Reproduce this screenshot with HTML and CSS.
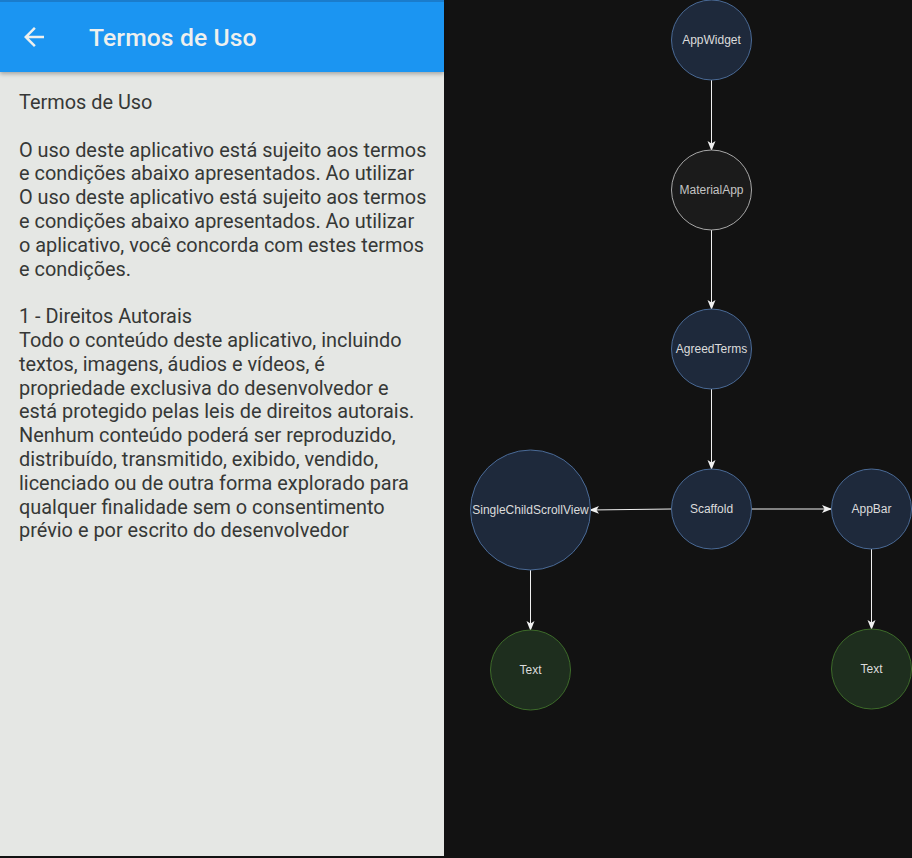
FILE: index.html
```html
<!DOCTYPE html>
<html lang="pt">
<head>
<meta charset="utf-8">
<title>Termos de Uso</title>
<link rel="stylesheet" href="styles.css">
</head>
<body>
<div class="page">
  <section class="phone">
    <header class="appbar">
      <svg class="back" viewBox="0 0 24 24" width="30" height="30"><path d="M20 11H7.83l5.59-5.59L12 4l-8 8 8 8 1.41-1.41L7.83 13H20v-2z"/></svg>
      <h1 class="title">Termos de Uso</h1>
    </header>
    <div class="content">
      <p class="para">Termos de Uso</p>
      <p class="para">O uso deste aplicativo está sujeito aos termos<br>e condições abaixo apresentados. Ao utilizar<br>O uso deste aplicativo está sujeito aos termos<br>e condições abaixo apresentados. Ao utilizar<br>o aplicativo, você concorda com estes termos<br>e condições.</p>
      <p class="para">1 - Direitos Autorais<br>Todo o conteúdo deste aplicativo, incluindo<br>textos, imagens, áudios e vídeos, é<br>propriedade exclusiva do desenvolvedor e<br>está protegido pelas leis de direitos autorais.<br>Nenhum conteúdo poderá ser reproduzido,<br>distribuído, transmitido, exibido, vendido,<br>licenciado ou de outra forma explorado para<br>qualquer finalidade sem o consentimento<br>prévio e por escrito do desenvolvedor</p>
    </div>
  </section>
  <section class="tree">
    <svg class="diagram" viewBox="0 0 468 858" width="468" height="858">
      <defs>
        <marker id="arr" viewBox="0 0 10 10" refX="9" refY="5" markerWidth="10" markerHeight="10" markerUnits="userSpaceOnUse" orient="auto">
          <path d="M0 1 L10 5 L0 9 L2.5 5 Z" class="head"/>
        </marker>
      </defs>
      <line class="edge" x1="267.5" y1="80" x2="267.5" y2="150" marker-end="url(#arr)"/>
      <line class="edge" x1="267.5" y1="230" x2="267.5" y2="309" marker-end="url(#arr)"/>
      <line class="edge" x1="267.5" y1="389" x2="267.5" y2="469" marker-end="url(#arr)"/>
      <line class="edge" x1="227" y1="509" x2="146" y2="510" marker-end="url(#arr)"/>
      <line class="edge" x1="307" y1="509" x2="387" y2="509" marker-end="url(#arr)"/>
      <line class="edge" x1="86.5" y1="570" x2="86.5" y2="630" marker-end="url(#arr)"/>
      <line class="edge" x1="427.5" y1="549" x2="427.5" y2="629" marker-end="url(#arr)"/>

      <circle class="node" cx="267.5" cy="40" r="40"/>
      <text class="label" x="267.5" y="44">AppWidget</text>
      <circle class="node grey" cx="267.5" cy="190" r="40"/>
      <text class="label dim" x="267.5" y="194">MaterialApp</text>
      <circle class="node" cx="267.5" cy="349" r="40"/>
      <text class="label" x="267.5" y="353">AgreedTerms</text>
      <circle class="node" cx="267.5" cy="509" r="40"/>
      <text class="label" x="267.5" y="513">Scaffold</text>
      <circle class="node" cx="427.5" cy="509" r="40"/>
      <text class="label" x="427.5" y="513">AppBar</text>
      <circle class="node" cx="86.5" cy="510" r="60"/>
      <text class="label" x="86.5" y="514">SingleChildScrollView</text>
      <circle class="node green" cx="86.5" cy="670" r="40"/>
      <text class="label" x="86.5" y="674">Text</text>
      <circle class="node green" cx="427.5" cy="669" r="40"/>
      <text class="label" x="427.5" y="673">Text</text>
    </svg>
  </section>
</div>
</body>
</html>
```

FILE: styles.css
```css
html, body {
  margin: 0;
  padding: 0;
  background: #121212;
}

.page {
  display: flex;
  width: 912px;
  height: 858px;
  overflow: hidden;
}

.phone {
  width: 444px;
  height: 856px;
  flex: none;
  background: #e5e7e4;
  display: flex;
  flex-direction: column;
  font-family: Roboto, "Liberation Sans", sans-serif;
}

.appbar {
  height: 70px;
  flex: none;
  border-top: 2px solid #1a7ccc;
  background: #1b95f2;
  display: flex;
  align-items: center;
  padding-left: 19px;
  box-shadow: 0 2px 4px rgba(0, 0, 0, 0.28);
  position: relative;
  z-index: 1;
}

.back {
  fill: #eef0ee;
  flex: none;
}

.title {
  margin: 0 0 0 40px;
  font-size: 24.7px;
  font-weight: 500;
  color: #eef0ee;
  letter-spacing: 0.1px;
}

.content {
  padding: 19px 0 0 19px;
  color: #363836;
  font-size: 19.9px;
  line-height: 23.8px;
  white-space: nowrap;
}

.para {
  margin: 0 0 23.8px 0;
}

.tree {
  flex: 1;
  background: #121212;
}

.diagram {
  display: block;
}

.edge {
  stroke: #f0f0f0;
  stroke-width: 1;
}

.head {
  fill: #f0f0f0;
}

.node {
  fill: #1e293b;
  stroke: #4a6a96;
  stroke-width: 1;
}

.node.grey {
  fill: #1b1b1b;
  stroke: #a8a8a8;
}

.node.green {
  fill: #1e2e1e;
  stroke: #3d6b2a;
}

.label {
  font-family: "Liberation Sans", Arial, sans-serif;
  font-size: 12px;
  fill: #dcdcdc;
  text-anchor: middle;
}

.label.dim {
  fill: #c4c4c4;
}
```
